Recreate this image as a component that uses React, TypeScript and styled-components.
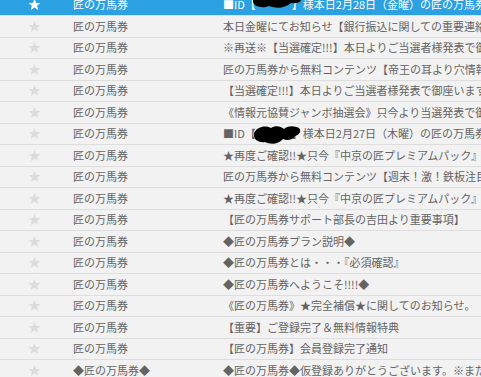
import styled, { createGlobalStyle } from 'styled-components';

const GlobalStyle = createGlobalStyle`
  html, body {
    margin: 0;
    padding: 0;
    background: #f2f2f2;
    overflow: hidden;
  }
`

const MailList = styled.div`
  display: flex;
  flex-direction: column;
  margin-top: -5.5px;
  width: 481px;
  font-family: "Noto Sans CJK JP", "DejaVu Sans", sans-serif;
  font-size: 11px;
`

const Row = styled.div<{ $selected?: boolean }>`
  display: grid;
  grid-template-columns: 68px 150px 1fr;
  align-items: center;
  box-sizing: border-box;
  height: 21.5px;
  border-bottom: 1px solid #dedede;
  background: ${p => (p.$selected ? '#2ca1e1' : '#f2f2f2')};
  color: ${p => (p.$selected ? '#ffffff' : '#646464')};
  white-space: nowrap;
  overflow: hidden;
`

const StarCell = styled.div`
  display: flex;
  justify-content: center;
  align-items: center;
`

const TextCell = styled.div`
  padding-left: 5px;
  overflow: hidden;
  line-height: 21px;
`

const Redacted = styled.span<{ $w: number }>`
  position: relative;
  display: inline-block;
  width: ${p => p.$w}px;
  height: 1em;
  vertical-align: middle;
`

const Blob = styled.svg`
  position: absolute;
  left: -5px;
  top: -7px;
  overflow: visible;
`

const Star = ({ color }: { color: string }) => (
  <svg width="13" height="13" viewBox="0 0 24 24">
    <polygon
      points="12,1.5 15,9 23,9.3 16.8,14.3 19,22.3 12,17.7 5,22.3 7.2,14.3 1,9.3 9,9"
      fill={color}
    />
  </svg>
)

const Scribble = ({ variant }: { variant: number }) => (
  <Blob width="52" height="24" viewBox="0 0 52 24">
    {variant === 0 ? (
      <path
        d="M2 4 C6 -2 20 -1 30 2 C36 0 46 -2 50 3 C52 8 46 10 40 9 C34 14 26 15 18 12 C10 15 3 12 2 8 Z"
        fill="#000"
      />
    ) : (
      <path
        d="M3 10 C6 4 14 2 20 5 C24 2 30 3 33 6 C37 2 44 3 48 5 C51 8 48 12 44 13 C42 17 36 18 32 16 C28 21 20 22 14 19 C8 20 2 17 3 10 Z"
        fill="#000"
      />
    )}
  </Blob>
)

type Mail = { sender: string; subject: React.ReactNode; selected?: boolean }

const mails: Mail[] = [
  {
    sender: '匠の万馬券',
    selected: true,
    subject: (
      <>
        ■ID【<Redacted $w={36}><Scribble variant={0} /></Redacted>】様本日2月28日（金曜）の匠の万馬券からのお知らせ
      </>
    ),
  },
  { sender: '匠の万馬券', subject: '本日金曜にてお知らせ【銀行振込に関しての重要連絡】' },
  { sender: '匠の万馬券', subject: '※再送※【当選確定!!!】本日よりご当選者様発表で御座います' },
  { sender: '匠の万馬券', subject: '匠の万馬券から無料コンテンツ【帝王の耳より穴情報】が' },
  { sender: '匠の万馬券', subject: '【当選確定!!!】本日よりご当選者様発表で御座います!!' },
  { sender: '匠の万馬券', subject: '《情報元協賛ジャンボ抽選会》只今より当選発表で御座います' },
  {
    sender: '匠の万馬券',
    subject: (
      <>
        ■ID【<Redacted $w={36}><Scribble variant={1} /></Redacted>】様本日2月27日（木曜）の匠の万馬券からのお知らせ
      </>
    ),
  },
  { sender: '匠の万馬券', subject: '★再度ご確認!!★只今『中京の匠プレミアムパック』の受付' },
  { sender: '匠の万馬券', subject: '匠の万馬券から無料コンテンツ【週末！激！鉄板注目】' },
  { sender: '匠の万馬券', subject: '★再度ご確認!!★只今『中京の匠プレミアムパック』の受付' },
  { sender: '匠の万馬券', subject: '【匠の万馬券サポート部長の吉田より重要事項】' },
  { sender: '匠の万馬券', subject: '◆匠の万馬券プラン説明◆' },
  { sender: '匠の万馬券', subject: '◆匠の万馬券とは・・・『必須確認』' },
  { sender: '匠の万馬券', subject: '◆匠の万馬券へようこそ!!!!◆' },
  { sender: '匠の万馬券', subject: '《匠の万馬券》★完全補償★に関してのお知らせ。' },
  { sender: '匠の万馬券', subject: '【重要】ご登録完了＆無料情報特典' },
  { sender: '匠の万馬券', subject: '【匠の万馬券】会員登録完了通知' },
  { sender: '◆匠の万馬券◆', subject: '◆匠の万馬券◆仮登録ありがとうございます。※まだ登録は完了しておりません' },
]

export default function App() {
  return (
    <>
      <GlobalStyle />
      <MailList>
        {mails.map((m, i) => (
          <Row key={i} $selected={m.selected}>
            <StarCell>
              <Star color={m.selected ? '#ffffff' : '#dcdcdc'} />
            </StarCell>
            <TextCell>{m.sender}</TextCell>
            <TextCell>{m.subject}</TextCell>
          </Row>
        ))}
      </MailList>
    </>
  );
}
